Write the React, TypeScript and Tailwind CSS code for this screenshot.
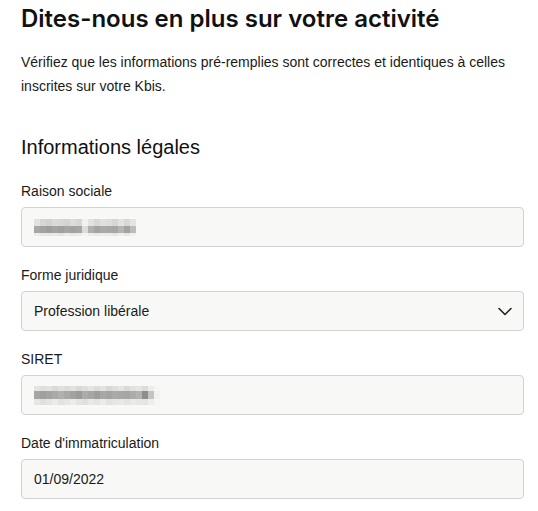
import type { ReactNode } from 'react'

const titleFont = { fontFamily: 'Inter, "Noto Sans", sans-serif' }
const bodyFont = { fontFamily: '"Liberation Sans", Arial, sans-serif' }

// pixelated (blurred) values, one string of greys per row
const raisonMosaic = [
  { h: 7, cells: ['#e2e2e0', '#d6d6d4', '#d2d2d0', '#dadad8', '#d8d8d6', '#d4d4d2', '#dcdcda', '#d6d6d4', '#f2f2f0', '#e2e2e0', '#d8d8d6', '#e0e0de', '#dedcdc', '#d6d6d4', '#e2e2e0', '#d8d8d6', '#e4e4e2'] },
  { h: 7, cells: ['#a8a8a6', '#a2a2a0', '#9e9e9c', '#a4a4a2', '#a0a09e', '#a6a6a4', '#a2a2a0', '#a6a6a4', '#dcdcda', '#b0b0ae', '#a4a4a2', '#aaaaa8', '#a8a8a6', '#a6a6a4', '#b4b4b2', '#a2a2a0', '#bcbcba'] },
  { h: 3, cells: ['#ececea', '#e8e8e6', '#e6e6e4', '#eaeae8', '#e4e4e2', '#ececea', '#e6e6e4', '#eaeae8', '#f4f4f2', '#ececea', '#e8e8e6', '#ececea', '#eaeae8', '#e6e6e4', '#eeeeec', '#e8e8e6', '#f0f0ee'] },
]

const siretMosaic = [
  { h: 5, cells: ['#e4e4e2', '#dedede', '#e2e2e0', '#dadad8', '#e0e0de', '#dcdcda', '#e2e2e0', '#d8d8d6', '#dedede', '#e4e4e2', '#dcdcda', '#e2e2e0', '#d8d8d6', '#dedede', '#e4e4e2', '#dadad8', '#e2e2e0', '#e6e6e4', '#dcdcda', '#ececea', '#f6f6f4'] },
  { h: 8, cells: ['#a6a6a4', '#a0a09e', '#a4a4a2', '#aaaaa8', '#b0b0ae', '#a8a8a6', '#a2a2a0', '#9c9c9a', '#acacaa', '#a6a6a4', '#9e9e9c', '#a8a8a6', '#a4a4a2', '#aaaaa8', '#a8a8a6', '#a6a6a4', '#acacaa', '#b2b2b0', '#8e8e8c', '#c4c4c2', '#f2f2f0'] },
  { h: 6, cells: ['#e6e6e4', '#e0e0de', '#e4e4e2', '#eaeae8', '#e2e2e0', '#e6e6e4', '#ececea', '#e4e4e2', '#e0e0de', '#e8e8e6', '#e4e4e2', '#eaeae8', '#e2e2e0', '#e6e6e4', '#e8e8e6', '#e4e4e2', '#eaeae8', '#e6e6e4', '#e4e4e2', '#eeeeec', '#f6f6f4'] },
]

function Mosaic({ rows, cell }: { rows: { h: number; cells: string[] }[]; cell: number }) {
  return (
    <div className="flex flex-col">
      {rows.map((row, i) => (
        <div key={i} className="flex">
          {row.cells.map((c, j) => (
            <span key={j} style={{ width: cell, height: row.h, backgroundColor: c }} />
          ))}
        </div>
      ))}
    </div>
  )
}

function Field({ label, children }: { label: string; children: ReactNode }) {
  return (
    <div className="mb-[18px] flex flex-col">
      <label className="mb-[6px] text-[14px] leading-[20px] text-[#1a1a1a]">{label}</label>
      {children}
    </div>
  )
}

function Box({ children }: { children: ReactNode }) {
  return (
    <div className="flex h-[40px] w-[503px] items-center justify-between rounded-[4px] border border-[#d2d2d0] bg-[#f8f8f6] pl-[12px] pr-[10px] text-[14px] text-[#1a1a1a]">
      {children}
    </div>
  )
}

export default function App() {
  return (
    <div className="min-h-[511px] bg-white px-[21px] pt-[3px]" style={bodyFont}>
      <h1 className="mb-[15px] text-[24px] font-semibold leading-[32px] text-[#111111]" style={titleFont}>
        Dites-nous en plus sur votre activité
      </h1>
      <p className="w-[503px] text-[14px] leading-[24px] text-[#1a1a1a]">
        Vérifiez que les informations pré-remplies sont correctes et identiques à celles inscrites sur votre Kbis.
      </p>

      <h2 className="mt-[35px] mb-[20px] text-[20px] leading-[28px] text-[#111111]">Informations légales</h2>

      <Field label="Raison sociale">
        <Box>
          <div className="pt-[1px]">
            <Mosaic rows={raisonMosaic} cell={6} />
          </div>
        </Box>
      </Field>

      <Field label="Forme juridique">
        <Box>
          <span>Profession libérale</span>
          <svg width="16" height="16" viewBox="0 0 16 16" fill="none" stroke="#1a1a1a" strokeWidth="1.5" strokeLinecap="round" strokeLinejoin="round">
            <path d="M2 5.5l6 6 6-6" />
          </svg>
        </Box>
      </Field>

      <Field label="SIRET">
        <Box>
          <div className="pt-[1px]">
            <Mosaic rows={siretMosaic} cell={6} />
          </div>
        </Box>
      </Field>

      <Field label="Date d'immatriculation">
        <Box>
          <span>01/09/2022</span>
        </Box>
      </Field>
    </div>
  )
}
